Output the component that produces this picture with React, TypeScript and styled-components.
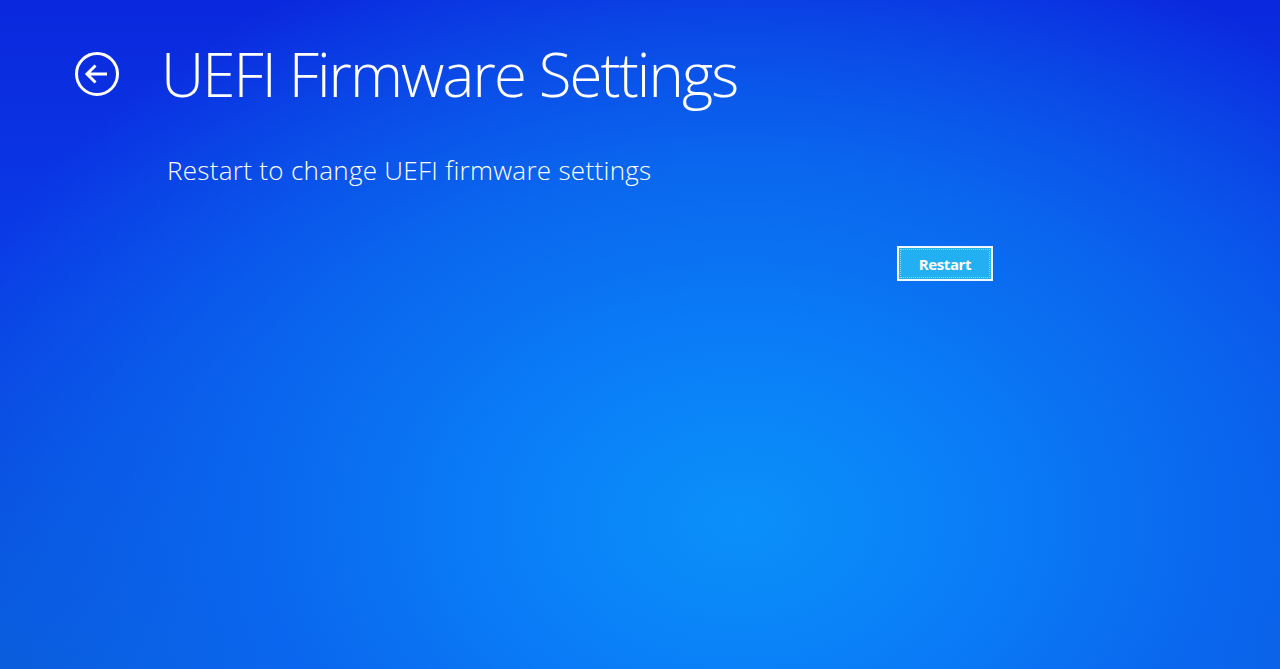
import styled, { createGlobalStyle } from "styled-components";

const GlobalStyle = createGlobalStyle`
  html, body {
    margin: 0;
    padding: 0;
    height: 100%;
  }
  #root {
    height: 100%;
  }
`;

const Screen = styled.div`
  width: 1280px;
  height: 669px;
  overflow: hidden;
  box-sizing: border-box;
  padding: 42px 0 0 74px;
  color: #ffffff;
  font-family: "Open Sans", "Noto Sans", "Liberation Sans", sans-serif;
  background:
    radial-gradient(
      ellipse 840px 620px at 740px 520px,
      #0a90fa 0%,
      #0a7ef7 28%,
      #0a66ee 58%,
      rgba(10, 60, 225, 0) 100%
    ),
    linear-gradient(180deg, #0a28de 0%, #0a3ce6 40%, #0a5cd8 100%);
`;

const Header = styled.div`
  display: flex;
  align-items: center;
  gap: 41px;
`;

const BackButton = styled.button`
  width: 46px;
  height: 46px;
  padding: 0;
  border: none;
  background: none;
  color: #ffffff;
  display: flex;
  align-items: center;
  justify-content: center;
  cursor: pointer;
`;

const Title = styled.h1`
  margin: 0;
  font-size: 60px;
  font-weight: 300;
  letter-spacing: -1.9px;
  line-height: 64px;
`;

const Content = styled.div`
  margin: 48px 0 0 93px;
  width: 826px;
  display: flex;
  flex-direction: column;
`;

const Description = styled.p`
  margin: 0;
  font-size: 26px;
  font-weight: 300;
  letter-spacing: 0.3px;
  line-height: 32px;
`;

const Actions = styled.div`
  display: flex;
  justify-content: flex-end;
  margin-top: 60px;
`;

const RestartButton = styled.button`
  width: 96px;
  height: 35px;
  box-sizing: border-box;
  border: 2px solid #f2f8ff;
  outline: 1px dotted #8fd8ff;
  outline-offset: -4px;
  background: #22b0f2;
  color: #ffffff;
  font-family: "Open Sans", "Noto Sans", "Liberation Sans", sans-serif;
  font-size: 15px;
  font-weight: 700;
  letter-spacing: -0.4px;
  cursor: pointer;
`;

function BackIcon() {
  return (
    <svg width="46" height="46" viewBox="0 0 46 46" fill="none">
      <circle cx="23" cy="23" r="20.5" stroke="currentColor" strokeWidth="3" />
      <path
        d="M33 23H13M21.5 14.5L13 23l8.5 8.5"
        stroke="currentColor"
        strokeWidth="3"
        strokeLinejoin="miter"
      />
    </svg>
  );
}

export default function App() {
  return (
    <>
      <GlobalStyle />
      <Screen>
        <Header>
          <BackButton aria-label="Back">
            <BackIcon />
          </BackButton>
          <Title>UEFI Firmware Settings</Title>
        </Header>
        <Content>
          <Description>Restart to change UEFI firmware settings</Description>
          <Actions>
            <RestartButton>Restart</RestartButton>
          </Actions>
        </Content>
      </Screen>
    </>
  );
}
